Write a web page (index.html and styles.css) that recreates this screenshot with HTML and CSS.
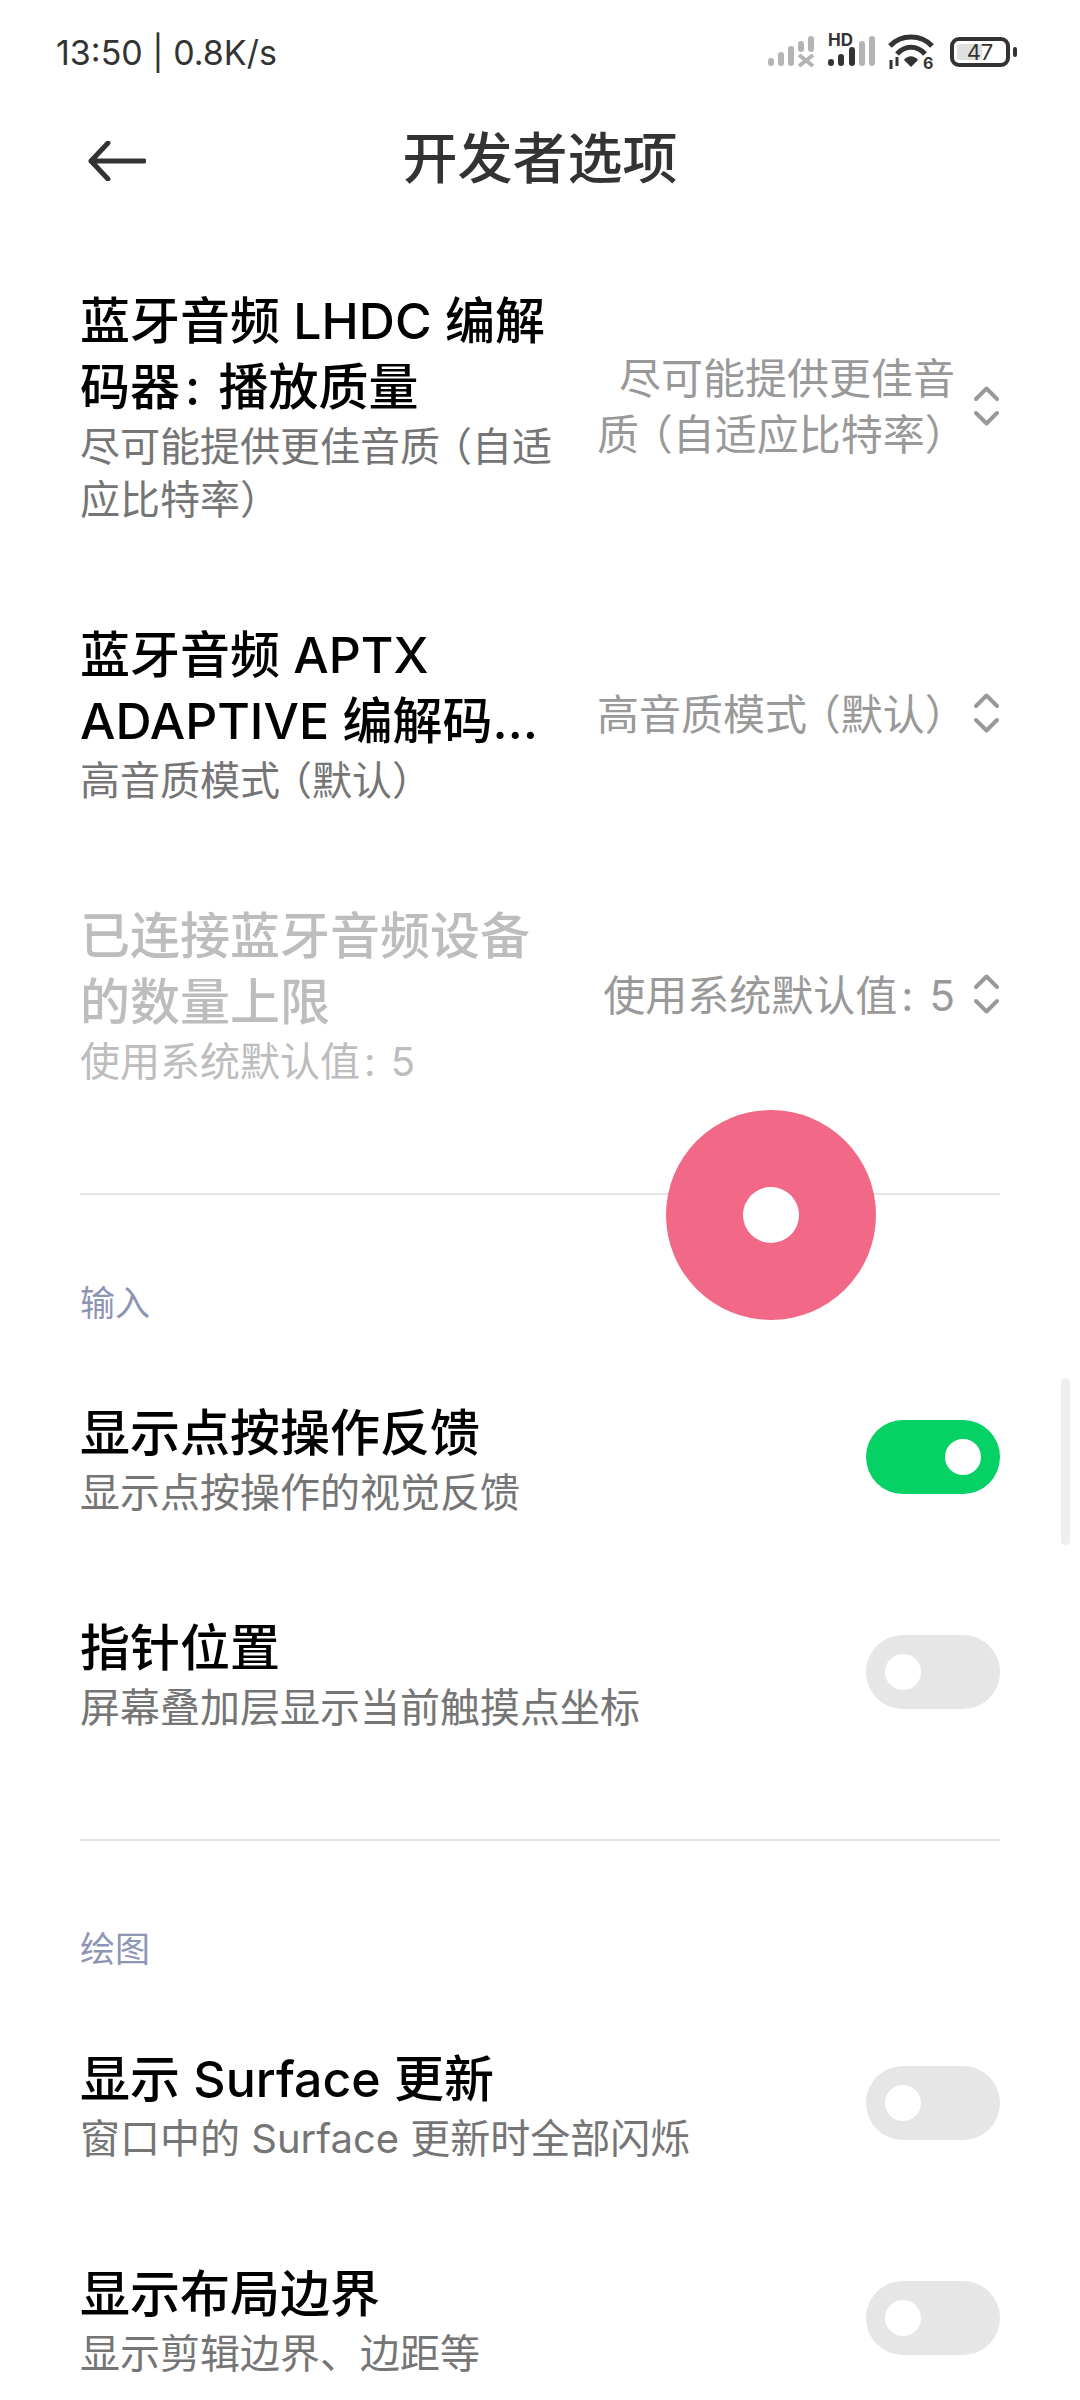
FILE: index.html
```html
<!DOCTYPE html>
<html lang="zh-CN">
<head>
    <meta charset="UTF-8">
    <meta name="viewport" content="width=device-width, initial-scale=1.0">
    <title>开发者选项</title>
    <link rel="stylesheet" href="styles.css">
</head>
<body>
    <div class="tela">
        <div class="status">
            <span class="hora">13:50 | 0.8K/s</span>
            <div class="status-icones">
                <svg class="sinal" width="48" height="32" viewBox="0 0 48 32">
                    <g fill="#b4b4b4">
                        <rect x="0" y="22" width="6" height="8" rx="3"/>
                        <rect x="10" y="16" width="6" height="14" rx="3"/>
                        <rect x="20" y="10" width="6" height="20" rx="3"/>
                        <rect x="30" y="5" width="6" height="11" rx="3"/>
                        <rect x="40" y="0" width="6" height="16" rx="3"/>
                    </g>
                    <path d="M31 19l14 11M45 19L31 30" stroke="#b4b4b4" stroke-width="4" fill="none"/>
                </svg>
                <div class="sinal-hd">
                    <span class="hd">HD</span>
                    <svg width="48" height="32" viewBox="0 0 48 32">
                        <rect x="0" y="23" width="6" height="7" rx="3" fill="#333"/>
                        <rect x="10" y="18" width="6" height="12" rx="3" fill="#333"/>
                        <rect x="21" y="11" width="6" height="19" rx="3" fill="#333"/>
                        <rect x="31" y="5" width="6" height="25" rx="3" fill="#b4b4b4"/>
                        <rect x="41" y="0" width="6" height="30" rx="3" fill="#b4b4b4"/>
                    </svg>
                </div>
                <svg class="wifi" width="46" height="36" viewBox="0 0 46 36">
                    <g fill="none" stroke="#333" stroke-width="5">
                        <path d="M2 12C13 0 33 0 44 12"/>
                        <path d="M9 20C17 11 29 11 37 20"/>
                    </g>
                    <path d="M16 26C20 21 26 21 30 26L23 33Z" fill="#333"/>
                    <path d="M3 26v9M9 23v9" stroke="#333" stroke-width="3"/>
                    <text x="35" y="35" class="wifi-seis">6</text>
                </svg>
                <div class="bateria">
                    <div class="bateria-corpo">
                        <span class="bateria-nivel"></span>
                        <span class="bateria-num">47</span>
                    </div>
                    <span class="bateria-ponta"></span>
                </div>
            </div>
        </div>

        <div class="topo">
            <svg class="voltar" width="58" height="40" viewBox="0 0 58 40">
                <path d="M56 20H3M20 2L3 20l17 18" fill="none" stroke="#333" stroke-width="5" stroke-linecap="round" stroke-linejoin="round"/>
            </svg>
            <h1 class="titulo">开发者选项</h1>
        </div>

        <div class="lista">
            <div class="item">
                <div class="item-texto">
                    <div class="nome">蓝牙音频 LHDC 编解码器<span class="dp">:</span> 播放质量</div>
                    <div class="desc">尽可能提供更佳音质<span class="abre">（</span>自适应比特率）</div>
                </div>
                <div class="valor">尽可能提供更佳音<br>质<span class="abre">（</span>自适应比特率）</div>
                <svg class="setas" width="25" height="40" viewBox="0 0 25 40">
                    <path d="M2 13L12.5 2.5 23 13M2 27l10.5 10.5L23 27" fill="none" stroke="#999" stroke-width="4" stroke-linecap="round" stroke-linejoin="round"/>
                </svg>
            </div>
            <div class="item">
                <div class="item-texto">
                    <div class="nome nome-corte">蓝牙音频 APTX ADAPTIVE 编解码器<span class="dp">:</span> 播放质量</div>
                    <div class="desc">高音质模式<span class="abre">（</span>默认）</div>
                </div>
                <div class="valor">高音质模式<span class="abre">（</span>默认）</div>
                <svg class="setas" width="25" height="40" viewBox="0 0 25 40">
                    <path d="M2 13L12.5 2.5 23 13M2 27l10.5 10.5L23 27" fill="none" stroke="#999" stroke-width="4" stroke-linecap="round" stroke-linejoin="round"/>
                </svg>
            </div>
            <div class="item desativado">
                <div class="item-texto">
                    <div class="nome">已连接蓝牙音频设备的数量上限</div>
                    <div class="desc">使用系统默认值<span class="dp">:</span> 5</div>
                </div>
                <div class="valor">使用系统默认值<span class="dp">:</span> 5</div>
                <svg class="setas" width="25" height="40" viewBox="0 0 25 40">
                    <path d="M2 13L12.5 2.5 23 13M2 27l10.5 10.5L23 27" fill="none" stroke="#999" stroke-width="4" stroke-linecap="round" stroke-linejoin="round"/>
                </svg>
            </div>

            <div class="divisor"></div>
            <div class="secao">输入</div>

            <div class="item">
                <div class="item-texto largo">
                    <div class="nome">显示点按操作反馈</div>
                    <div class="desc">显示点按操作的视觉反馈</div>
                </div>
                <span class="chave ligada"><span class="bolinha"></span></span>
            </div>
            <div class="item">
                <div class="item-texto largo">
                    <div class="nome">指针位置</div>
                    <div class="desc">屏幕叠加层显示当前触摸点坐标</div>
                </div>
                <span class="chave"><span class="bolinha"></span></span>
            </div>

            <div class="divisor"></div>
            <div class="secao">绘图</div>

            <div class="item">
                <div class="item-texto largo">
                    <div class="nome">显示 Surface 更新</div>
                    <div class="desc">窗口中的 Surface 更新时全部闪烁</div>
                </div>
                <span class="chave"><span class="bolinha"></span></span>
            </div>
            <div class="item">
                <div class="item-texto largo">
                    <div class="nome">显示布局边界</div>
                    <div class="desc">显示剪辑边界、边距等</div>
                </div>
                <span class="chave"><span class="bolinha"></span></span>
            </div>
        </div>

        <div class="rolagem"></div>
        <div class="toque"><span class="toque-centro"></span></div>
    </div>
</body>
</html>
```

FILE: styles.css
```css
* {
    box-sizing: border-box;
}

body {
    margin: 0;
    background-color: #fff;
    font-family: Inter, "Noto Sans CJK SC", sans-serif;
}

.tela {
    position: relative;
    width: 1080px;
    height: 2400px;
    overflow: hidden;
}

.status {
    height: 100px;
    padding: 4px 63px 0 56px;
    display: flex;
    align-items: center;
    justify-content: space-between;
}

.hora {
    font-size: 34px;
    color: #333;
}

.status-icones {
    display: flex;
    align-items: center;
    gap: 12px;
}

.sinal-hd {
    position: relative;
    display: flex;
}

.hd {
    position: absolute;
    left: 0;
    top: -3px;
    font-weight: 700;
    font-size: 17px;
    line-height: 14px;
    color: #333;
}

.wifi-seis {
    font-weight: 700;
    font-size: 16px;
    fill: #333;
}

.bateria {
    display: flex;
    align-items: center;
    gap: 3px;
    margin-left: 4px;
}

.bateria-corpo {
    position: relative;
    width: 60px;
    height: 30px;
    border: 4px solid #333;
    border-radius: 9px;
    display: flex;
    align-items: center;
    justify-content: center;
}

.bateria-nivel {
    position: absolute;
    left: 3px;
    top: 3px;
    bottom: 3px;
    width: 25px;
    border-radius: 2px;
    background-color: #e0e0e0;
}

.bateria-num {
    position: relative;
    font-size: 22px;
    line-height: 22px;
    color: #333;
}

.bateria-ponta {
    width: 4px;
    height: 10px;
    border-radius: 2px;
    background-color: #333;
}

.topo {
    position: relative;
    height: 116px;
    display: flex;
    align-items: center;
    justify-content: center;
}

.voltar {
    position: absolute;
    left: 88px;
    top: 41px;
}

.titulo {
    margin: 0 0 8px;
    font-size: 55px;
    font-weight: 500;
    color: #333;
}

.lista {
    padding: 21px 0 0 80px;
    width: 1000px;
}

.item {
    display: flex;
    align-items: center;
    padding: 45px 0;
}

.item-texto {
    width: 480px;
    margin-right: 37px;
    padding-top: 6px;
    flex-shrink: 0;
}

.item-texto.largo {
    width: 700px;
    margin-right: auto;
}

.nome {
    font-size: 50px;
    line-height: 66px;
    font-weight: 500;
    color: #000;
}

.nome-corte {
    display: -webkit-box;
    -webkit-box-orient: vertical;
    -webkit-line-clamp: 2;
    overflow: hidden;
}

.desc {
    font-size: 40px;
    line-height: 53px;
    color: #757575;
}

.valor {
    width: 358px;
    padding-top: 6px;
    flex-shrink: 0;
    text-align: right;
    white-space: nowrap;
    font-size: 42px;
    line-height: 56px;
    color: #999;
}

.abre {
    margin-left: -0.2em;
}

.dp {
    margin: 0 0.1em;
}

.setas {
    margin-left: 19px;
    margin-top: 3px;
    flex-shrink: 0;
}

.desativado .nome,
.desativado .desc {
    color: #bdbdbd;
}

.divisor {
    height: 2px;
    margin-top: 60px;
    background-color: #e5e5e5;
}

.secao {
    margin-top: 83px;
    margin-bottom: 21px;
    font-size: 35px;
    line-height: 50px;
    color: #8d95b5;
}

.chave {
    width: 134px;
    height: 74px;
    flex-shrink: 0;
    border-radius: 37px;
    padding: 19px;
    display: flex;
    background-color: #e6e6e6;
}

.chave.ligada {
    justify-content: flex-end;
    background-color: #05d165;
}

.bolinha {
    width: 36px;
    height: 36px;
    border-radius: 50%;
    background-color: #fff;
}

.rolagem {
    position: absolute;
    left: 1061px;
    top: 1378px;
    width: 9px;
    height: 167px;
    border-radius: 5px;
    background-color: #eee;
}

.toque {
    position: absolute;
    left: 666px;
    top: 1110px;
    width: 210px;
    height: 210px;
    border-radius: 50%;
    display: flex;
    align-items: center;
    justify-content: center;
    background-color: rgba(240, 96, 126, 0.94);
}

.toque-centro {
    width: 56px;
    height: 56px;
    border-radius: 50%;
    background-color: #fff;
}
```
